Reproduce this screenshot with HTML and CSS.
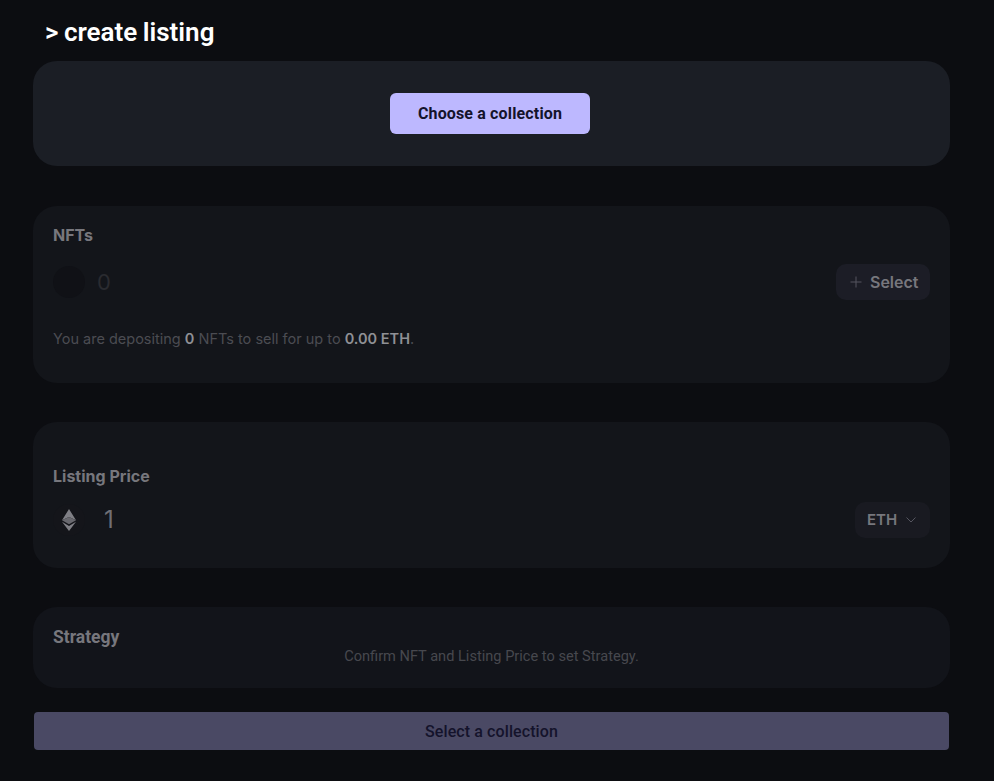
FILE: index.html
```html
<!DOCTYPE html>
<html lang="en">
<head>
  <meta charset="UTF-8">
  <title>Create listing</title>
  <link rel="stylesheet" href="styles.css">
</head>
<body>
  <div class="page">
    <h1 class="title">&gt; create listing</h1>

    <section class="card collection-card">
      <button class="choose-btn">Choose a collection</button>
    </section>

    <section class="card nfts-card">
      <h3 class="label">NFTs</h3>
      <div class="row">
        <div class="nft-value">
          <span class="nft-icon"></span>
          <span class="nft-count">0</span>
        </div>
        <button class="pill select-btn">
          <svg class="plus" width="12" height="12" viewBox="0 0 12 12"><path d="M6 0.5v11M0.5 6h11" stroke="currentColor" stroke-width="1" fill="none"/></svg>
          Select
        </button>
      </div>
      <p class="summary">You are depositing <b>0</b> NFTs to sell for up to <b>0.00 ETH</b>.</p>
    </section>

    <section class="card price-card">
      <h3 class="label">Listing Price</h3>
      <div class="row">
        <div class="price-value">
          <span class="eth-icon">
            <svg width="14" height="22" viewBox="0 0 14 22">
              <path d="M7 0L0 11.2L7 8.1L14 11.2Z" fill="#7f7f85"/>
              <path d="M0 11.2L7 15.3L14 11.2L7 8.1Z" fill="#68686e"/>
              <path d="M0 12.8L7 22L14 12.8L7 16.9Z" fill="#7f7f85"/>
            </svg>
          </span>
          <span class="price">1</span>
        </div>
        <button class="pill eth-btn">
          ETH
          <svg width="10" height="6" viewBox="0 0 10 6"><path d="M0.5 0.5L5 5L9.5 0.5" stroke="#55555f" stroke-width="1" fill="none"/></svg>
        </button>
      </div>
    </section>

    <section class="card strategy-card">
      <h3 class="label strategy-label">Strategy</h3>
      <p class="hint">Confirm NFT and Listing Price to set Strategy.</p>
    </section>

    <button class="submit-btn">Select a collection</button>
  </div>
</body>
</html>
```

FILE: styles.css
```css
body {
  margin: 0;
  background: #0c0d11;
  font-family: Inter, "Liberation Sans", sans-serif;
  color: #77777d;
}

.page {
  width: 917px;
  margin-left: 33px;
}

.title {
  margin: 0;
  padding: 16px 0 0 12px;
  height: 61px;
  box-sizing: border-box;
  font-family: Roboto, sans-serif;
  font-size: 26px;
  line-height: 32px;
  font-weight: 600;
  word-spacing: -1px;
  color: #ffffff;
}

.card {
  box-sizing: border-box;
  border-radius: 24px;
  background: #13151a;
  padding: 0 20px;
}

.collection-card {
  height: 105px;
  background: #1b1e25;
  display: flex;
  justify-content: center;
  align-items: center;
  padding-right: 23px;
  margin-bottom: 40px;
}

.choose-btn {
  width: 200px;
  height: 41px;
  border: none;
  border-radius: 6px;
  background: #bdb8ff;
  color: #14132b;
  font-family: Roboto, sans-serif;
  font-size: 16px;
  font-weight: 700;
  letter-spacing: 0.15px;
}

.label {
  margin: 0;
  font-size: 16px;
  line-height: 20px;
  font-weight: 700;
  color: #77777d;
}

.strategy-label {
  font-family: Roboto, sans-serif;
  font-size: 17.5px;
  font-weight: 700;
}

.row {
  display: flex;
  justify-content: space-between;
  align-items: center;
}

.nfts-card {
  height: 177px;
  padding-top: 19px;
  margin-bottom: 39px;
}

.nfts-card .row {
  margin-top: 18px;
  height: 37px;
}

.nft-value,
.price-value {
  display: flex;
  align-items: center;
}

.nft-icon {
  width: 32px;
  height: 32px;
  border-radius: 50%;
  background: #101116;
}

.nft-count {
  margin-left: 12px;
  font-size: 22px;
  color: #2a2b30;
}

.pill {
  display: flex;
  align-items: center;
  border: none;
  border-radius: 10px;
  background: #1c1d26;
  color: #77777d;
  font-family: Inter, "Liberation Sans", sans-serif;
  font-size: 16px;
  font-weight: 600;
}

.select-btn {
  width: 94px;
  height: 36px;
  padding: 0 0 0 14px;
  gap: 8px;
}

.plus {
  color: #55555f;
}

.eth-btn {
  width: 75px;
  height: 36px;
  padding: 0 0 0 12px;
  gap: 9px;
  font-size: 15px;
  background: #191a21;
}

.summary {
  margin: 29px 0 0;
  font-size: 14.5px;
  line-height: 20px;
  color: #4b4c52;
}

.summary b {
  font-weight: 600;
  color: #8f9095;
}

.price-card {
  height: 146px;
  padding-top: 44px;
  margin-bottom: 39px;
}

.price-card .row {
  margin-top: 15px;
  height: 37px;
}

.eth-icon {
  width: 32px;
  height: 32px;
  border-radius: 50%;
  display: flex;
  justify-content: center;
  align-items: center;
  background: #14151a;
}

.price {
  margin-left: 19px;
  font-size: 24px;
  color: #6f6f75;
}

.strategy-card {
  height: 81px;
  padding-top: 20px;
  background: #12141a;
  margin-bottom: 24px;
}

.hint {
  margin: 0;
  text-align: center;
  font-family: Roboto, sans-serif;
  font-size: 14.6px;
  line-height: 18px;
  color: #47484e;
}

.submit-btn {
  display: block;
  width: 915px;
  height: 38px;
  margin-left: 1px;
  border: none;
  border-radius: 4px;
  background: #4a4964;
  color: #14132b;
  font-family: Roboto, sans-serif;
  font-size: 16px;
  font-weight: 500;
  letter-spacing: 0.1px;
}
```
